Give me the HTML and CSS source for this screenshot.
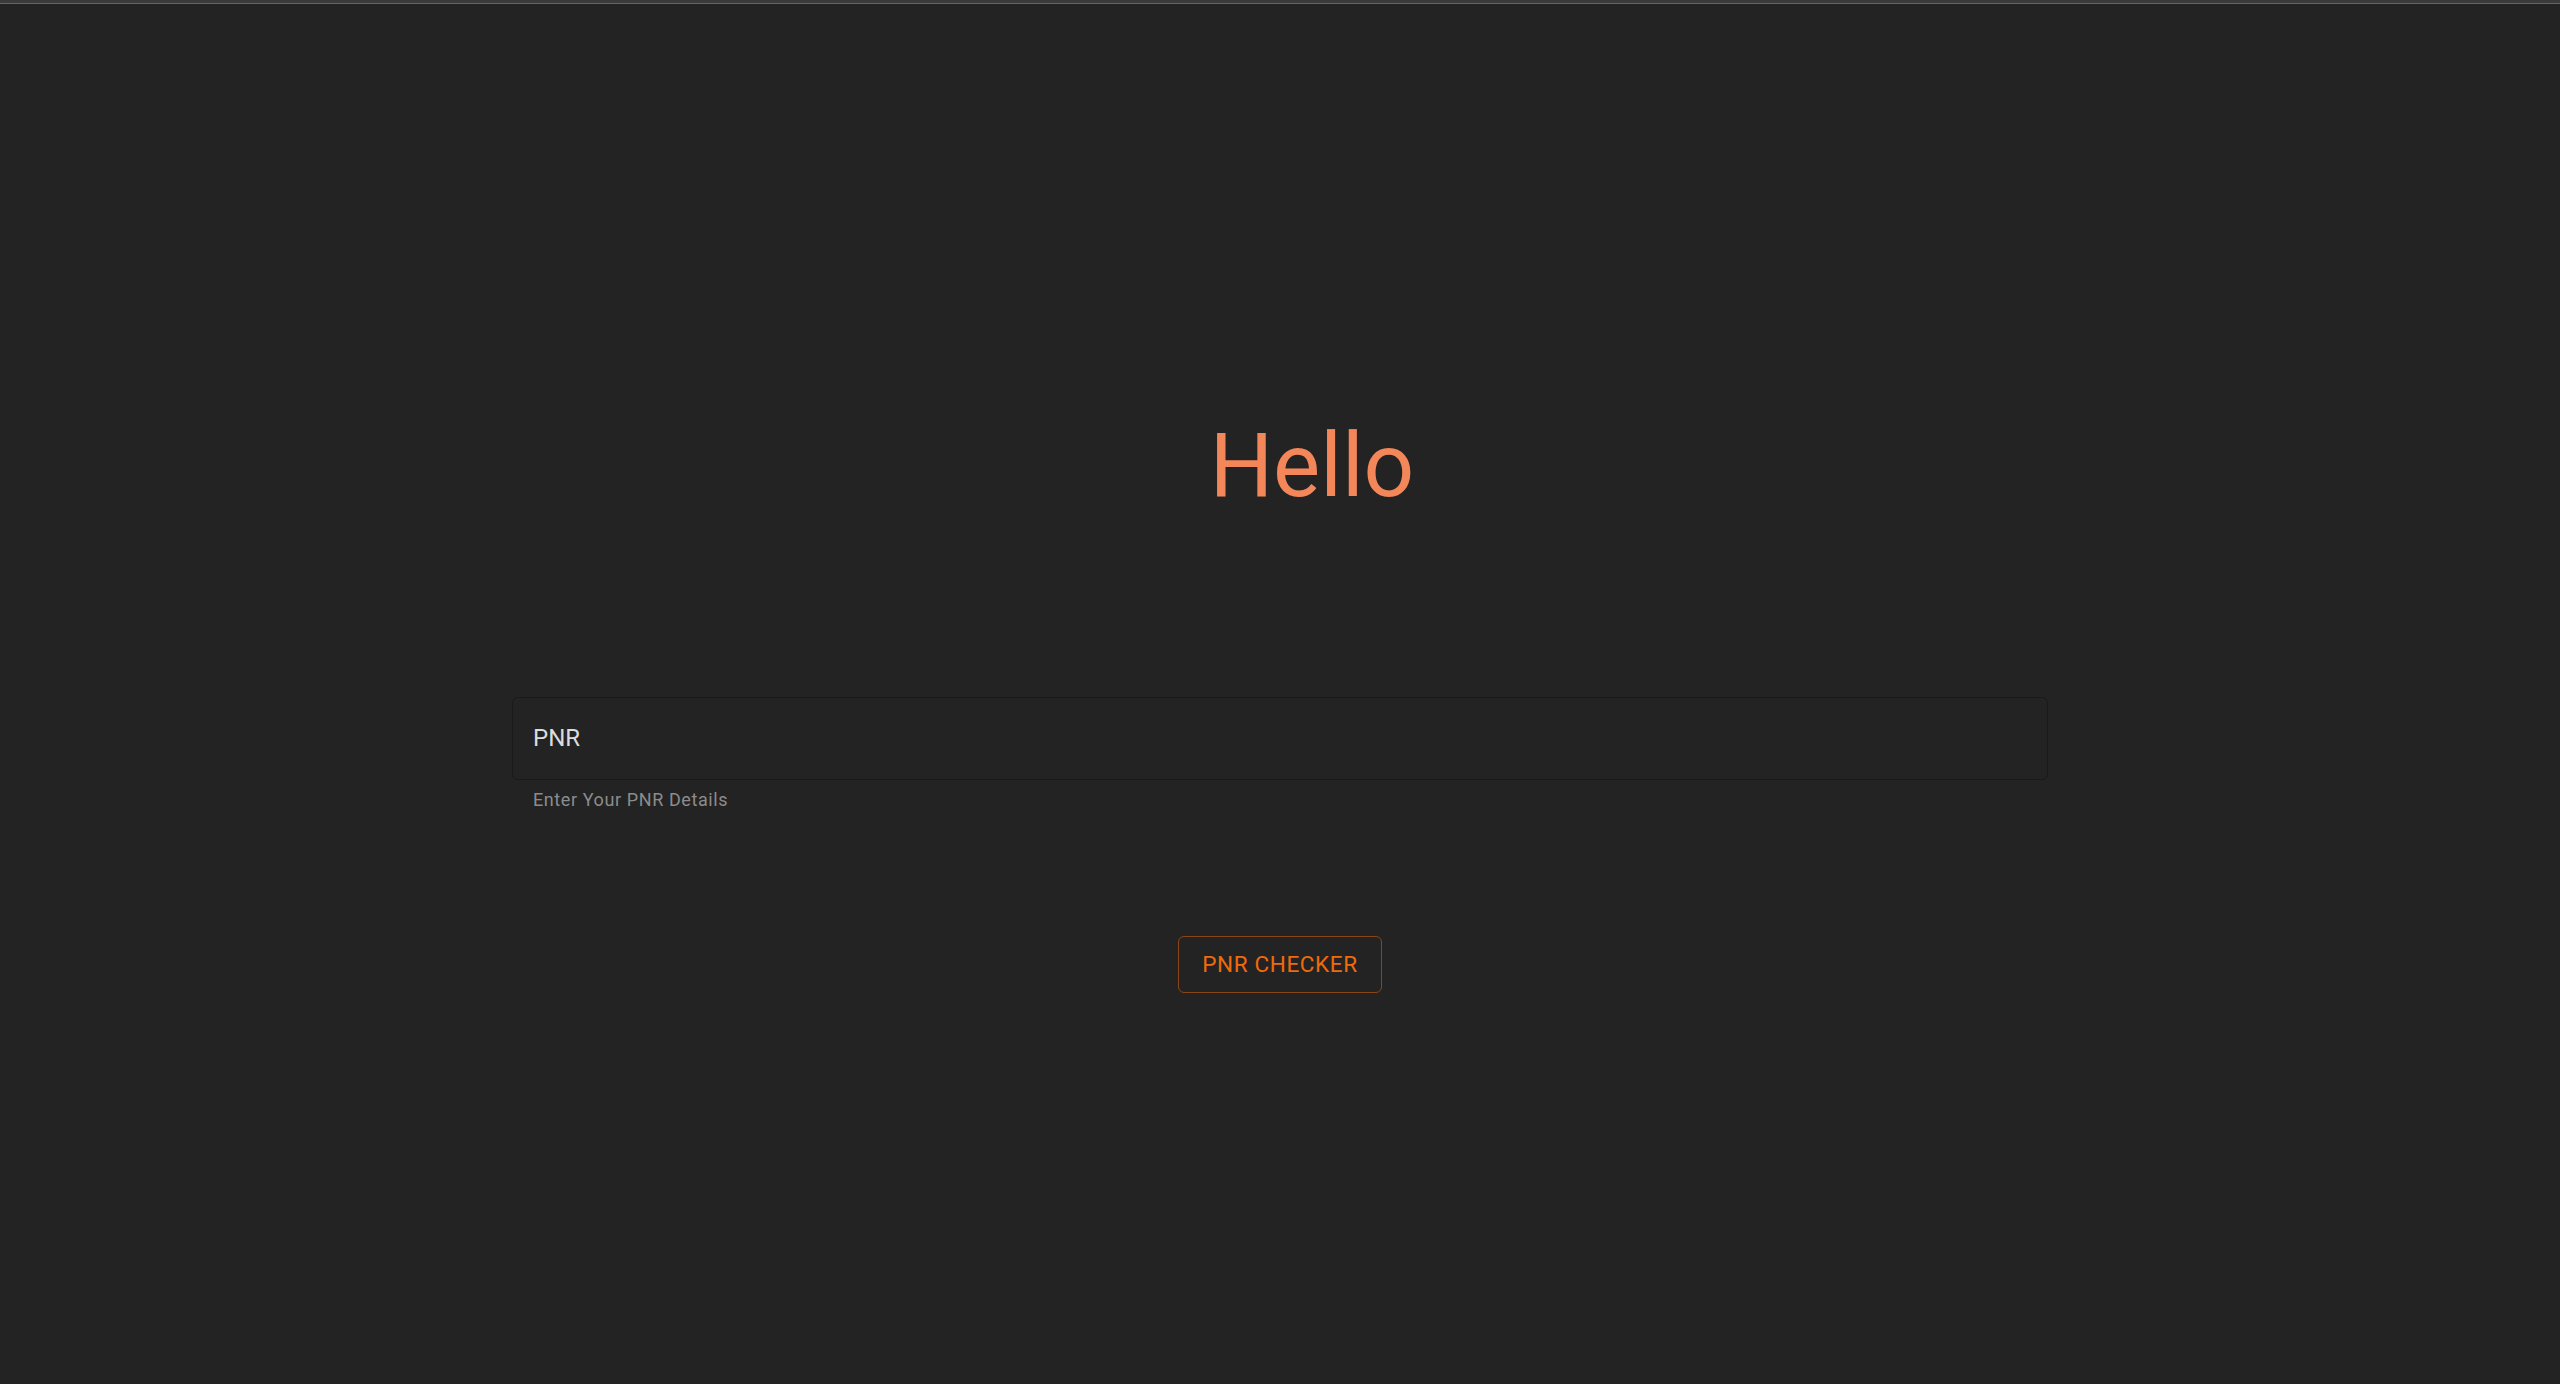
FILE: index.html
```html
<!DOCTYPE html>
<html lang="en">
<head>
<meta charset="utf-8">
<title>PNR Checker</title>
<link rel="stylesheet" href="styles.css">
</head>
<body>
<div class="topbar"></div>
<main class="page">
  <h1 class="greeting">Hello</h1>
  <div class="field">
    <div class="field-box">
      <input class="field-input" type="text" value="PNR" aria-label="PNR">
    </div>
    <p class="field-helper">Enter Your PNR Details</p>
  </div>
  <button class="checker-btn" type="button">PNR CHECKER</button>
</main>
</body>
</html>
```

FILE: styles.css
```css
html, body {
  margin: 0;
  padding: 0;
  background: #232323;
  font-family: Roboto, "Liberation Sans", sans-serif;
}

.topbar {
  height: 3px;
  background: #3a3a3a;
  border-bottom: 1px solid #646464;
}

.page {
  display: flex;
  flex-direction: column;
  align-items: center;
}

.greeting {
  margin: 408px 0 0 0;
  padding-left: 64px;
  font-size: 89px;
  line-height: 108px;
  font-weight: 400;
  color: #f3875a;
  text-align: center;
}

.field {
  width: 1536px;
  margin-top: 177px;
  display: flex;
  flex-direction: column;
}

.field-box {
  border: 1px solid #1a1a1a;
  border-radius: 6px;
  background: #232323;
  padding: 23px 20px 23.5px;
}

.field-input {
  display: block;
  width: 100%;
  box-sizing: border-box;
  margin: 0;
  padding: 0;
  border: 0;
  outline: none;
  background: transparent;
  font-family: Roboto, "Liberation Sans", sans-serif;
  font-size: 24px;
  line-height: 34.5px;
  height: 34.5px;
  color: #dcdcdc;
}

.field-helper {
  margin: 5px 0 0 21px;
  font-size: 18px;
  line-height: 30px;
  letter-spacing: 0.6px;
  color: #8c8c8c;
}

.checker-btn {
  margin-top: 121px;
  padding: 7.8px 23px 7.3px;
  border: 1px solid #8a4516;
  border-radius: 6px;
  background: transparent;
  font-family: Roboto, "Liberation Sans", sans-serif;
  font-size: 22.5px;
  line-height: 39.4px;
  font-weight: 400;
  letter-spacing: 0.64px;
  color: #f06a0c;
  text-transform: uppercase;
  cursor: pointer;
}
```
